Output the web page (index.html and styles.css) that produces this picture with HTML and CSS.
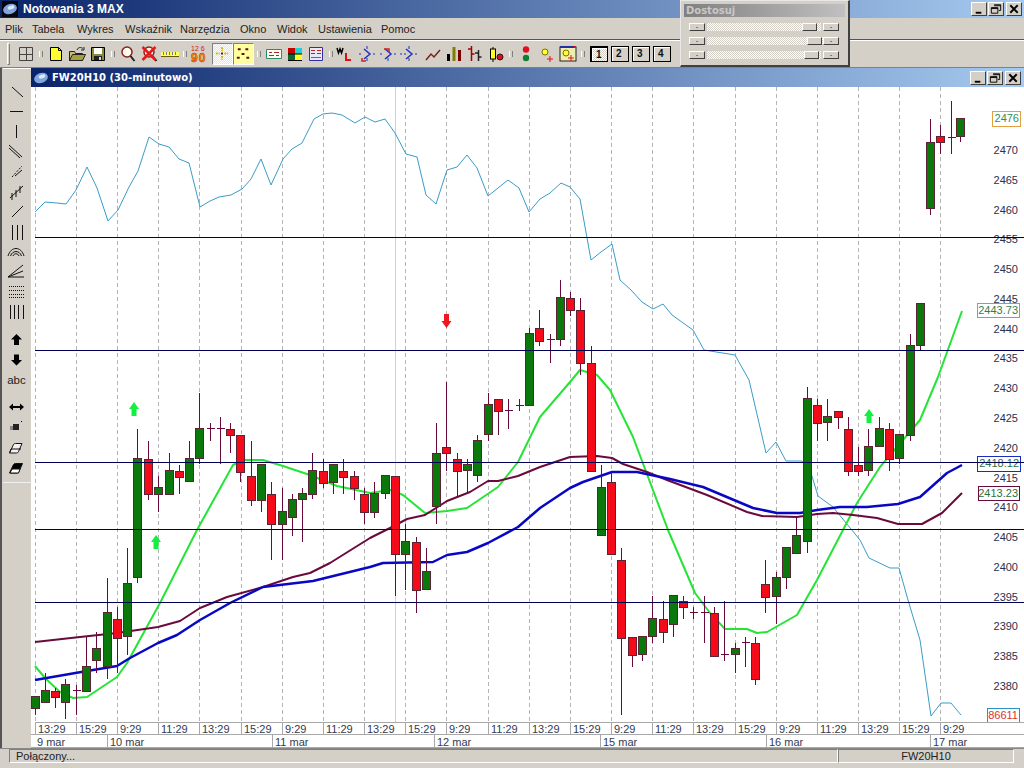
FILE: index.html
```html
<!DOCTYPE html>
<html lang="pl">
<head>
<meta charset="utf-8">
<title>Notowania 3 MAX</title>
<link rel="stylesheet" href="styles.css">
</head>
<body>
<div class="app">
  <header class="titlebar">
    <svg class="appicon" viewBox="0 0 16 16"><rect width="16" height="16" fill="#05060f"/><ellipse cx="8" cy="8" rx="7" ry="5" fill="#7fa6dc" transform="rotate(-18 8 8)"/><ellipse cx="9" cy="6.5" rx="3.5" ry="1.8" fill="#dfe9f6" transform="rotate(-18 9 6.5)"/></svg>
    <span class="title-text">Notowania 3 MAX</span>
    <div class="winbtns">
      <span class="winbtn"><svg viewBox="0 0 15 12"><rect x="4" y="9" width="6" height="2" fill="#000"/></svg></span>
      <span class="winbtn"><svg viewBox="0 0 15 12"><path d="M5.5 1.5h7v6h-2M2.5 4.5h7v6h-7zM2.5 5.5h7M5.5 2.5h7" fill="none" stroke="#000"/></svg></span>
      <span class="winbtn closebtn"><svg viewBox="0 0 15 12"><path d="M3.5 2l8 8M11.5 2l-8 8" stroke="#000" stroke-width="2"/></svg></span>
    </div>
  </header>

  <nav class="menubar">
    <span class="m1">Plik</span><span class="m2">Tabela</span><span class="m3">Wykres</span><span class="m4">Wskaźnik</span><span class="m5">Narzędzia</span><span class="m6">Okno</span><span class="m7">Widok</span><span class="m8">Ustawienia</span><span class="m9">Pomoc</span>
  </nav>

  <div class="toolbar">
    <span class="grip"></span>
    <span class="ico"><svg viewBox="0 0 20 20"><path d="M3.5 3.5h13v13h-13zM10.500 3.500v13M3.500 10.500h13" fill="none" stroke="#444"/></svg></span>
    <span class="sep"></span>
    <span class="ico"><svg viewBox="0 0 20 20"><path d="M4.5 3.5h8l3 3v10h-11z" fill="#ffff30" stroke="#000"/><path d="M12.5 3.5v3h3" fill="none" stroke="#000"/></svg></span>
    <span class="ico"><svg viewBox="0 0 20 20"><path d="M2.5 7.5h5l1 2h7v7h-13z" fill="#c8c070" stroke="#222"/><path d="M2.5 16.5l3-6h13l-3 6z" fill="#a8a040" stroke="#222"/><path d="M10 6c1-3 4-3 6-1.500M17 3v3h-3" fill="none" stroke="#222"/></svg></span>
    <span class="ico"><svg viewBox="0 0 20 20"><path d="M3.500 3.500h13v13h-13z" fill="#8a8a40" stroke="#000"/><rect x="6" y="4" width="8" height="6" fill="#fff"/><rect x="6" y="12" width="8" height="4" fill="#222"/><rect x="11" y="13" width="2" height="3" fill="#ddd"/></svg></span>
    <span class="sep"></span>
    <span class="ico"><svg viewBox="0 0 20 20"><circle cx="9" cy="8" r="5" fill="#fffdf0" stroke="#8a1f1f" stroke-width="1.500"/><path d="M12.500 12l4 5" stroke="#222" stroke-width="2"/></svg></span>
    <span class="ico"><svg viewBox="0 0 20 20"><circle cx="10" cy="8" r="5" fill="#f4f0e0" stroke="#8a1f1f" stroke-width="1.500"/><path d="M13.500 12l4 5" stroke="#222" stroke-width="2"/><path d="M3.500 3l13 13M16.500 3l-13 13" stroke="#e81818" stroke-width="2.500"/></svg></span>
    <span class="ico"><svg viewBox="0 0 20 20"><rect x="1" y="8" width="18" height="4" fill="#ffff60"/><path d="M1 12.500h18" stroke="#6a5a00"/><path d="M3.500 8v3M6.500 8v3M9.500 8v3M12.500 8v3M15.500 8v3" stroke="#777"/></svg></span>
    <span class="sep"></span>
    <span class="ico"><svg viewBox="0 0 20 20"><text x="1" y="7" class="ico-small">12 6</text><text x="1" y="18" class="ico-big">90</text></svg></span>
    <span class="ico pressed first-press"><svg viewBox="0 0 20 20"><path d="M9.500 3v4M9.500 12v4M3 9.500h4M12 9.500h4" stroke="#d8b000" stroke-width="2" stroke-dasharray="2 1"/><rect x="8.500" y="8.500" width="2" height="2" fill="#222"/></svg></span>
    <span class="ico pressed yellow"><svg viewBox="0 0 20 20"><path d="M4 5h3M12 5h3M8 10h3M3 14h3M13 14h3" stroke="#5a1010" stroke-width="2"/></svg></span>
    <span class="sep"></span>
    <span class="ico"><svg viewBox="0 0 20 20"><path d="M2.500 5.500h15v9h-15z" fill="#fdfdf0" stroke="#2a8a6a"/><path d="M5 8.500h3M10 8.500h5M5 11.500h5M12 11.500h3" stroke="#a03030"/></svg></span>
    <span class="ico"><svg viewBox="0 0 20 20"><rect x="3" y="4" width="7" height="6" fill="#c80000"/><rect x="10" y="4" width="7" height="6" fill="#20d0d8"/><rect x="3" y="10" width="7" height="6" fill="#0a6a30"/><rect x="10" y="10" width="7" height="6" fill="#ffff20"/><path d="M3 16.500h14M3 10h14" stroke="#000"/></svg></span>
    <span class="ico"><svg viewBox="0 0 20 20"><path d="M3.500 3.500h13v13h-13z" fill="#e8e8f8" stroke="#3030a0"/><path d="M5 6.500h4M11 6.500h4M5 9.500h4M11 9.500h4" stroke="#c02020"/><path d="M5 13.500h10" stroke="#20a020"/></svg></span>
    <span class="sep"></span>
    <span class="ico"><svg viewBox="0 0 20 20"><path d="M1 4l1.500 5 1.500-4 1.500 4 1.500-5" fill="none" stroke="#000" stroke-width="1.500"/><path d="M10 9v7h5" fill="none" stroke="#e01010" stroke-width="2"/></svg></span>
    <span class="ico"><svg viewBox="0 0 20 20"><path d="M2 10h2M16 10h2M10 2v3M10 14v3" stroke="#2030c0"/><path d="M7 5l6 5-6 5" fill="none" stroke="#2030c0" stroke-width="1.500"/><path d="M5 14v3h4" fill="none" stroke="#d02020" stroke-width="1.500"/></svg></span>
    <span class="ico"><svg viewBox="0 0 20 20"><path d="M2 10h2M16 10h2M10 14v3" stroke="#2030c0"/><path d="M7 5l6 5-6 5" fill="none" stroke="#2030c0" stroke-width="1.500"/><path d="M6 5h5v3" fill="none" stroke="#d02020" stroke-width="1.500"/></svg></span>
    <span class="ico"><svg viewBox="0 0 20 20"><path d="M1 10h2M5 10h2M16 10h2M10 2v3M10 14v3" stroke="#2030c0"/><path d="M7 5l6 5-6 5" fill="none" stroke="#2030c0" stroke-width="1.500"/></svg></span>
    <span class="ico shift"><svg viewBox="0 0 20 20"><path d="M3 16l5-6 3 3 6-7" fill="none" stroke="#7a2020" stroke-width="1.500"/></svg></span>
    <span class="ico"><svg viewBox="0 0 20 20"><rect x="3" y="10" width="3" height="7" fill="#000"/><rect x="8.500" y="3" width="3" height="14" fill="#808000"/><rect x="14" y="6" width="3" height="11" fill="#7a0000"/></svg></span>
    <span class="ico"><svg viewBox="0 0 20 20"><path d="M6.500 2v15M3 5h3.500M6.500 10h3" stroke="#a00000" stroke-width="1.500"/><path d="M13.500 6v11M10 9h3.500M13.500 13h3" stroke="#222" stroke-width="1.500"/></svg></span>
    <span class="ico"><svg viewBox="0 0 20 20"><path d="M7 3v15" stroke="#000"/><rect x="4.500" y="5" width="5" height="10" fill="#ffff20" stroke="#000"/><circle cx="14" cy="13" r="3" fill="#d81020" stroke="#301010"/></svg></span>
    <span class="sep"></span>
    <span class="ico"><svg viewBox="0 0 20 20"><circle cx="10" cy="5.500" r="3.200" fill="#e01020"/><circle cx="10" cy="14" r="3.200" fill="#108030"/></svg></span>
    <span class="ico"><svg viewBox="0 0 20 20"><circle cx="8" cy="8" r="3" fill="#ffff30" stroke="#807000"/><path d="M13 12v6M10 15h6" stroke="#e01010"/></svg></span>
    <span class="ico"><svg viewBox="0 0 20 20"><rect x="2" y="3" width="16" height="14" fill="#eeeeb0" stroke="#222"/><rect x="2" y="2" width="16" height="2" fill="#2030a0"/><rect x="16" y="2" width="2" height="2" fill="#e01010"/><circle cx="8" cy="9" r="3" fill="#ffff30" stroke="#807000"/><path d="M13 11v6M10 14h6" stroke="#e01010"/></svg></span>
    <span class="sep"></span>
    <div class="pages">
      <span class="page on">1</span><span class="page">2</span><span class="page">3</span><span class="page">4</span>
    </div>
  </div>

  <div class="workspace">
    <aside class="tools">
      <svg class="toolsvg" viewBox="0 0 27 415">
        <g fill="none" stroke="#111">
          <path d="M9 19l11 10M7 43.500h13M13.500 57v13M6 77l13 12M6 80l11 10"/>
          <path d="M9 109l10-11" stroke-dasharray="2 1.500"/><path d="M12 108l7-6"/>
          <path d="M7 130l13-12M9 132v-7M13 129v-7M17 125v-7"/>
          <path d="M9 149l11-11M9.500 157v15M14.500 157v15M19.500 157v15"/>
          <path d="M5 188c3-10 13-10 16 0M7.500 188c2-6 9-6 11 0M10 188c1-3 5-3 6 0"/>
          <path d="M5 209l15-12M5 209l15-6M5 209h16"/>
          <path d="M6 218.500h15M6 222.500h15M6 226.500h15M6 229.500h15" stroke-dasharray="1 1"/>
          <path d="M7.500 237v14M11.500 237v14M15.500 237v14M20.500 237v14"/>
        </g>
        <path d="M13.500 266l5.500 5.500h-3v5.500h-5v-5.500h-3z" fill="#000"/>
        <path d="M13.500 297.500l5.500-5.500h-3v-5.500h-5v5.500h-3z" fill="#000"/>
        <path d="M6 339l4-3.500v2.500h7v-2.500l4 3.500-4 3.500v-2.500h-7v2.500z" fill="#000"/>
        <rect x="10" y="356" width="6" height="6" fill="#222"/><rect x="7" y="358" width="3" height="4" fill="#888"/><rect x="18" y="353" width="1" height="1" fill="#000"/>
        <path d="M6.500 385l4-8.500q.5-1 2-1h6.500l-3.500 8q-.5 1.500-2 1.500z" fill="#f2f2f2" stroke="#111"/><path d="M6.500 385l1.500-4h10" fill="none" stroke="#111"/>
        <path d="M6.500 405l4-8.500q.5-1 2-1h7l-3.500 8q-.5 1.500-2 1.500z" fill="#000" stroke="#111"/><path d="M7 405l2-4h8l-1.500 4z" fill="#fff" stroke="#111"/>
      </svg>
      <span class="abc">abc</span>
    </aside>
    <section class="childwin">
      <header class="childtitle">
        <svg class="appicon" viewBox="0 0 16 16"><rect width="16" height="16" fill="#0a246a"/><ellipse cx="8" cy="8" rx="7" ry="5" fill="#7fa6dc" transform="rotate(-18 8 8)"/><ellipse cx="9" cy="6.500" rx="3.500" ry="1.800" fill="#dfe9f6" transform="rotate(-18 9 6.500)"/></svg>
        <span class="childtitle-text">FW20H10 (30-minutowo)</span>
        <div class="winbtns child">
          <span class="winbtn"><svg viewBox="0 0 15 12"><rect x="4" y="9" width="6" height="2" fill="#000"/></svg></span>
          <span class="winbtn"><svg viewBox="0 0 15 12"><path d="M5.500 1.500h7v6h-2M2.500 4.500h7v6h-7zM2.500 5.500h7M5.500 2.500h7" fill="none" stroke="#000"/></svg></span>
          <span class="winbtn closebtn"><svg viewBox="0 0 15 12"><path d="M3.500 2l8 8M11.500 2l-8 8" stroke="#000" stroke-width="2"/></svg></span>
        </div>
      </header>
      <svg id="chart" class="chart" viewBox="31 87 993 661"></svg>
    </section>
  </div>

  <footer class="statusbar">
    <span class="st-first">Połączony...</span>
    <span class="st-sym">FW20H10</span>
  </footer>

  <div class="floatwin">
    <div class="float-title">Dostosuj</div>
    <div class="sliders">
      <div class="slider"><span class="arrowbtn">·</span><span class="track pos1"><span class="thumb"></span></span><span class="arrowbtn">·</span></div>
      <div class="slider"><span class="arrowbtn">·</span><span class="track pos2"><span class="thumb"></span></span><span class="arrowbtn">·</span></div>
      <div class="slider"><span class="arrowbtn">·</span><span class="track pos3"><span class="thumb"></span></span><span class="arrowbtn">·</span></div>
    </div>
  </div>
</div>
<script src="chart.js"></script>
</body>
</html>
```
FILE: styles.css
```css
* { box-sizing: border-box; }
html, body { margin: 0; padding: 0; height: 100%; overflow: hidden; }
body { font-family: "Liberation Sans", Arial, sans-serif; font-size: 11px; color: #111; background: #d4d0c8; }
svg { display: block; }

.app { position: relative; width: 1024px; height: 768px; display: flex; flex-direction: column; background: #d4d0c8; }

.titlebar { height: 18px; flex: none; display: flex; align-items: center; padding-left: 2px; background: linear-gradient(90deg, #0a246a 0%, #a6caf0 100%); }
.appicon { width: 16px; height: 16px; flex: none; }
.title-text { margin-left: 5px; font: bold 12px "Liberation Sans", Arial, sans-serif; color: #fff; }
.winbtns { margin-left: auto; display: flex; padding-right: 2px; }
.winbtn { width: 16px; height: 14px; margin-left: 1px; background: #d4d0c8; border: 1px solid; border-color: #fff #404040 #404040 #fff; }
.winbtn svg { width: 14px; height: 12px; }
.closebtn { margin-left: 2px; }

.menubar { height: 22px; flex: none; display: flex; align-items: center; padding-left: 5px; font-size: 11px; color: #222; border-bottom: 1px solid #555; }
.m1 { width: 27px; } .m2 { width: 45px; } .m3 { width: 48px; } .m4 { width: 55px; } .m5 { width: 60px; }
.m6 { width: 37px; } .m7 { width: 41px; } .m8 { width: 63px; }

.toolbar { height: 28px; flex: none; display: flex; align-items: center; padding: 0 0 1px 7px; border-top: 1px solid #fff; border-bottom: 1px solid #808080; }
.grip { width: 3px; height: 22px; margin-right: 5px; border: 1px solid; border-color: #fff #808080 #808080 #fff; }
.ico { width: 21px; height: 22px; flex: none; display: flex; align-items: center; justify-content: center; }
.ico svg { width: 20px; height: 20px; }
.ico.shift { margin-left: 3px; }
.ico-small { font: 7px "Liberation Sans", Arial, sans-serif; fill: #d02010; }
.ico-big { font: bold 12px "Liberation Sans", Arial, sans-serif; fill: #e0a000; stroke: #d02010; stroke-width: 0.5px; letter-spacing: 1px; }
.sep { width: 9px; flex: none; height: 6px; position: relative; }
.sep::after { content: ""; display: block; width: 2px; height: 6px; margin: 0 auto; border-left: 1px solid #fff; border-right: 1px solid #808080; }
.pressed { background: repeating-conic-gradient(#fff 0 25%, #e6e2da 0 50%) 0 0 / 2px 2px; border: 1px solid; border-color: #808080 #fff #fff #808080; }
.first-press { margin-left: 2px; }
.pressed.yellow { background: #ffffa0; }
.pages { display: flex; gap: 3px; margin-left: 3px; }
.page { width: 18px; height: 16px; border: 1px solid #000; box-shadow: inset 1px 1px 0 #fff; font: bold 10px "Liberation Sans", Arial, sans-serif; line-height: 13px; padding-left: 4px; }
.page.on { background: repeating-conic-gradient(#fff 0 25%, #d4d0c8 0 50%) 0 0 / 2px 2px; border-width: 2px 1px 1px 2px; }

.workspace { flex: 1; min-height: 0; display: flex; border-left: 2px solid #555; padding-left: 1px; }
.tools { position: relative; width: 28px; flex: none; height: 415px; border-bottom: 1px solid #f0f0f0; border-top: 1px solid #fff; }
.toolsvg { width: 27px; height: 415px; margin-top: -1px; }
.abc { position: absolute; left: 0; width: 27px; top: 305px; text-align: center; font: 11.500px "Liberation Sans", Arial, sans-serif; color: #222; }
.childwin { flex: 1; min-width: 0; display: flex; flex-direction: column; }
.childtitle { height: 19px; flex: none; display: flex; align-items: center; padding-left: 2px; background: linear-gradient(90deg, #0a246a 0%, #a6caf0 100%); }
.childtitle-text { margin-left: 3px; font: bold 10px "DejaVu Sans", "Liberation Sans", sans-serif; color: #fff; }
.winbtns.child { padding-right: 3px; }
.chart { width: 993px; height: 661px; flex: none; background: #fff; }

.statusbar { height: 20px; flex: none; display: flex; padding: 0 10px 5px 9px; font-size: 11px; color: #222; border-top: 1px solid #888; }
.statusbar > span { border: 1px solid; border-color: #808080 #fff #fff #808080; display: flex; align-items: center; }
.st-first { flex: 1; padding-left: 6px; }
.st-sym { width: 176px; justify-content: center; }

/* floating palette */
.floatwin { position: absolute; left: 680px; top: 0; width: 170px; height: 67px; padding: 3px; background: #d4d0c8; border: 1px solid; border-color: #e8e8e8 #404040 #404040 #e8e8e8; border-width: 1px 2px 2px 1px; }
.float-title { height: 13px; padding-left: 2px; background: linear-gradient(90deg, #808080, #c0c0c0); color: #c8c8c8; font: bold 10px "DejaVu Sans", sans-serif; line-height: 13px; }
.sliders { display: flex; flex-direction: column; gap: 6px; padding: 6px 0 0 5px; }
.slider { display: flex; align-items: stretch; height: 8px; width: 150px; }
.arrowbtn { width: 16px; background: #d4d0c8; border: 1px solid; border-color: #fff #404040 #404040 #fff; font-size: 9px; line-height: 6px; text-align: center; }
.track { position: relative; flex: 1; margin: 0 2px; display: flex; background: repeating-conic-gradient(#fff 0 25%, #d4d0c8 0 50%) 0 0 / 2px 2px; }
.thumb { width: 15px; background: #d4d0c8; border: 1px solid; border-color: #fff #404040 #404040 #fff; }
.pos1 { padding-left: 95px; }
.pos2 { padding-left: 100px; margin-right: 0; }
.pos3 { padding-left: 97px; }

/* chart */
.grid { stroke: #b4b4b4; stroke-width: 1; stroke-dasharray: 4 3; }
.cursor { stroke: #9de8dc; stroke-width: 1; }
.hline { stroke: #000055; stroke-width: 1; }
.axis { stroke: #a8a8a8; stroke-width: 1; }
.series { fill: none; stroke-linejoin: round; }
.s-teal { stroke: #3a9cc6; stroke-width: 1; }
.s-green { stroke: #26e436; stroke-width: 2; }
.s-maroon { stroke: #6a0a3c; stroke-width: 2; }
.s-blue { stroke: #0808c4; stroke-width: 2.500; }
.wick { stroke: #6a0a3c; stroke-width: 1; shape-rendering: crispEdges; }
.body { stroke: #5a2434; stroke-width: 1; shape-rendering: crispEdges; }
.b-g { fill: #0a780a; }
.b-r { fill: #f40a18; }
.arrow-up { fill: #12f040; }
.arrow-down { fill: #f01820; }
.t { font: 11px "Liberation Sans", Arial, sans-serif; fill: #333a50; }
.t-price { font: 11px "Liberation Sans", Arial, sans-serif; fill: #2a3050; text-anchor: end; }
.tag { fill: none; stroke-width: 1; shape-rendering: crispEdges; }
.tag-text { font: 11px "Liberation Sans", Arial, sans-serif; text-anchor: end; }
```
FILE: chart.js
```js
(function () {
  var NS = 'http://www.w3.org/2000/svg';
  var svg = document.getElementById('chart');
  function el(name, attrs, text) {
    var n = document.createElementNS(NS, name);
    for (var k in attrs) n.setAttribute(k, attrs[k]);
    if (text !== undefined) n.textContent = text;
    svg.appendChild(n);
    return n;
  }
  function line(x1, y1, x2, y2, cls) { el('line', { x1: x1, y1: y1, x2: x2, y2: y2, 'class': cls }); }
  function poly(points, cls) { el('polyline', { points: points, 'class': 'series ' + cls }); }

  // vertical grid and time axis
  var times = ['13:29', '15:29', '9:29', '11:29'];
  var gx = [35, 76, 117, 158, 199, 241, 282, 323, 364, 405, 446, 488, 529, 570, 611, 652, 693, 735, 776, 817, 858, 899, 940];
  gx.forEach(function (x) { line(x + 0.5, 87, x + 0.5, 734, 'grid'); });
  line(395.5, 87, 395.5, 722, 'cursor');

  // series below candles
  poly('35,212 45,202 57,203 66,204 76,190 87,167 97,188 108,221 118,210 129,187 138,171 149,137 159,144 169,147 179,159 189,163 200,207 210,201 219,197 231,195 242,189 251,179 261,159 271,185 283,159 292,149 302,143 314,119 323,114 332,113 342,115 355,123 365,117 375,122 385,119 395,133 406,154 417,157 426,195 436,204 447,170 457,167 467,155 477,168 488,196 498,188 508,180 519,188 529,212 540,199 550,193 561,183 570,187 580,199 591,260 601,252 612,244 620,280 631,290 642,302 653,309 663,304 672,315 693,330 704,350 735,355 749,380 766,453 776,442 786,461 802,461 811,473 818,496 833,507 860,540 869,558 890,568 899,568 908,600 920,640 931,716 941,703 951,703 961,715', 's-teal');
  poly('35,666 45,678 60,692 73,698 87,697 117,677 127,663 160,603 197,530 233,465 243,460 263,460 283,466 310,475 337,486 370,493 390,490 403,495 425,513 447,511 467,508 498,487 518,462 540,417 570,382 580,370 597,375 610,390 633,437 668,530 695,593 710,613 725,629 747,629 757,633 767,632 797,615 817,580 857,503 880,467 920,420 938,377 962,311', 's-green');
  poly('35,642 80,637 117,633 158,627 180,621 200,608 227,597 263,587 293,577 310,573 330,563 370,538 390,528 407,519 425,515 447,501 470,492 488,481 498,481 518,476 540,467 570,457 597,456 612,458 623,464 647,472 667,480 707,495 747,512 762,516 797,517 817,514 833,513 853,515 877,518 898,524 922,524 942,513 962,493', 's-maroon');
  poly('35,680 87,671 117,666 130,658 158,643 177,635 200,620 230,603 263,587 313,581 370,567 383,563 433,562 447,555 467,552 488,543 518,527 540,508 570,488 583,482 612,472 637,472 670,479 703,487 753,508 777,513 800,513 817,510 840,507 867,507 898,504 920,497 947,473 962,465', 's-blue');

  // candles: x, high, low, body top, body bottom, colour (d = doji)
  var c = [
    [35,696,715,696,708,'g'],[45,673,702,690,702,'g'],[55,688,708,691,697,'r'],[65,679,719,684,702,'g'],[76,685,715,690,690,'d'],
    [86,637,691,666,691,'g'],[96,632,673,648,660,'g'],[107,578,679,612,666,'g'],[117,607,673,619,638,'r'],[127,548,655,583,636,'g'],
    [137,429,583,458,577,'g'],[148,441,500,459,494,'r'],[158,476,512,487,494,'g'],[169,453,494,470,494,'g'],[179,465,494,471,477,'r'],
    [189,441,481,458,481,'g'],[199,393,464,428,458,'g'],[210,423,441,428,428,'d'],[220,417,464,428,428,'d'],[230,423,453,429,435,'r'],
    [240,435,482,435,472,'r'],[251,441,506,476,500,'r'],[261,464,512,464,500,'g'],[271,482,560,494,524,'r'],[282,488,560,511,524,'g'],
    [292,494,536,499,517,'g'],[302,488,542,493,499,'g'],[312,453,499,470,494,'g'],[323,459,488,471,483,'r'],[333,464,494,464,482,'g'],
    [343,459,494,471,477,'r'],[354,471,500,476,488,'r'],[364,488,524,494,512,'r'],[374,482,518,493,512,'g'],[385,475,499,475,493,'g'],
    [395,476,596,476,554,'r'],[405,524,590,541,554,'g'],[416,537,613,542,590,'r'],[426,548,589,571,589,'g'],[436,423,524,453,506,'g'],
    [446,382,471,447,453,'r'],[457,453,496,459,471,'r'],[467,459,493,464,470,'g'],[477,435,482,440,475,'g'],[488,393,441,404,434,'g'],
    [498,399,435,399,411,'r'],[508,399,429,410,410,'d'],[519,399,411,405,405,'d'],[529,328,405,333,405,'g'],[539,310,346,328,341,'r'],
    [550,334,363,339,339,'d'],[560,280,346,297,339,'g'],[570,292,316,298,310,'r'],[580,298,375,310,363,'r'],[591,346,471,363,471,'r'],
    [601,465,535,487,535,'g'],[611,472,554,482,554,'r'],[621,548,715,560,638,'r'],[632,637,667,637,655,'r'],[642,636,661,636,654,'g'],
    [652,596,643,618,636,'g'],[663,601,643,619,632,'r'],[673,595,637,595,624,'g'],[683,596,619,601,607,'r'],[693,607,619,612,612,'d'],
    [704,596,643,612,612,'d'],[714,607,656,613,656,'r'],[724,601,661,654,654,'d'],[735,643,673,648,654,'g'],[745,637,667,642,642,'d'],
    [755,637,685,643,679,'r'],[765,560,613,584,597,'r'],[776,572,624,577,596,'g'],[786,547,589,547,577,'g'],[796,517,553,535,553,'g'],
    [807,387,553,398,541,'g'],[817,399,441,405,423,'r'],[827,399,441,416,422,'g'],[838,411,429,411,417,'r'],[848,417,476,429,471,'r'],
    [858,447,476,465,471,'r'],[868,429,476,446,470,'g'],[879,417,446,428,446,'g'],[889,423,471,429,459,'r'],[899,434,464,434,458,'g'],
    [910,334,441,345,435,'g'],[920,303,350,303,345,'g'],[930,119,215,142,208,'g'],[940,125,154,136,142,'r'],[951,101,154,137,137,'d'],
    [960,118,142,118,136,'g']
  ];
  c.forEach(function (k) {
    var x = k[0] + 0.5;
    line(x, k[1], x, k[2], 'wick');
    if (k[5] === 'd') { line(x - 4, k[3] + 0.5, x + 4, k[3] + 0.5, 'wick'); return; }
    el('rect', { x: k[0] - 3.5, y: k[3] + 0.5, width: 8, height: k[4] - k[3], 'class': 'body ' + (k[5] === 'g' ? 'b-g' : 'b-r') });
  });

  // signal arrows
  [[134, 402], [156, 535], [869, 409]].forEach(function (p) {
    el('path', { d: 'M' + p[0] + ' ' + p[1] + 'l5 7h-2.500v7h-5v-7h-2.500z', 'class': 'arrow-up' });
  });
  el('path', { d: 'M446.500 328l5-7h-2.500v-7h-5v7h-2.500z', 'class': 'arrow-down' });

  // price scale
  var prices = [[2470,150],[2465,180],[2460,210],[2455,239],[2450,269],[2445,299],[2440,329],[2435,358],[2430,388],[2425,418],[2420,448],[2415,478],[2410,507],[2405,537],[2400,567],[2395,597],[2390,626],[2385,656],[2380,686]];
  prices.forEach(function (p) { el('text', { x: 1018, y: p[1] + 4, 'class': 't-price' }, p[0]); });

  // value tags
  [
    [992, 111, 28, 15, '#e0a040', '#2f8f5a', '2476'],
    [977, 303, 42, 14, '#30e040', '#2f7f4a', '2443.73'],
    [977, 456, 43, 15, '#1a2cc0', '#2f6f4a', '2418.12'],
    [978, 486, 41, 14, '#6a0a3c', '#2f6f3a', '2413.23'],
    [987, 708, 32, 14, '#2a90c8', '#e03030', '86611']
  ].forEach(function (t) {
    el('rect', { x: t[0] + 0.5, y: t[1] + 0.5, width: t[2], height: t[3], stroke: t[4], 'class': 'tag' });
    el('text', { x: t[0] + t[2] - 1, y: t[1] + 11, fill: t[5], 'class': 'tag-text' }, t[6]);
  });

  // horizontal levels
  [238, 351, 463, 530, 603].forEach(function (y) { line(35, y - 0.5, 1024, y - 0.5, 'hline'); });

  // time axis
  line(35, 722.5, 1024, 722.5, 'axis');
  line(31, 734.5, 1024, 734.5, 'axis');
  line(31, 747.5, 1024, 747.5, 'axis');
  gx.forEach(function (x, i) {
    line(x + 0.5, 723, x + 0.5, 734, 'axis');
    el('text', { x: x + 3, y: 733, 'class': 't' }, times[i % 4]);
  });
  [[37, '9 mar'], [110, '10 mar'], [275, '11 mar'], [437, '12 mar'], [603, '15 mar'], [769, '16 mar'], [933, '17 mar']].forEach(function (d) {
    if (d[0] > 37) line(d[0] - 3 + 0.5, 735, d[0] - 3 + 0.5, 747, 'axis');
    el('text', { x: d[0], y: 746, 'class': 't' }, d[1]);
  });
})();
```
